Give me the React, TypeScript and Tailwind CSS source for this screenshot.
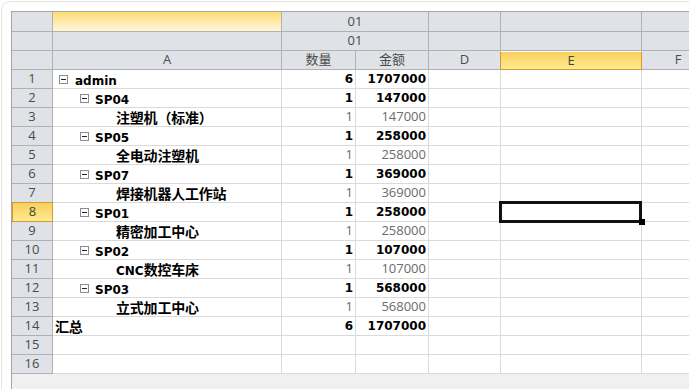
import React from "react";

type Row = {
  n: number;
  level?: 0 | 1 | 2 | 3;
  label?: string;
  qty?: string;
  amt?: string;
};

const rows: Row[] = [
  { n: 1, level: 0, label: "admin", qty: "6", amt: "1707000" },
  { n: 2, level: 1, label: "SP04", qty: "1", amt: "147000" },
  { n: 3, level: 2, label: "注塑机（标准）", qty: "1", amt: "147000" },
  { n: 4, level: 1, label: "SP05", qty: "1", amt: "258000" },
  { n: 5, level: 2, label: "全电动注塑机", qty: "1", amt: "258000" },
  { n: 6, level: 1, label: "SP07", qty: "1", amt: "369000" },
  { n: 7, level: 2, label: "焊接机器人工作站", qty: "1", amt: "369000" },
  { n: 8, level: 1, label: "SP01", qty: "1", amt: "258000" },
  { n: 9, level: 2, label: "精密加工中心", qty: "1", amt: "258000" },
  { n: 10, level: 1, label: "SP02", qty: "1", amt: "107000" },
  { n: 11, level: 2, label: "CNC数控车床", qty: "1", amt: "107000" },
  { n: 12, level: 1, label: "SP03", qty: "1", amt: "568000" },
  { n: 13, level: 2, label: "立式加工中心", qty: "1", amt: "568000" },
  { n: 14, level: 3, label: "汇总", qty: "6", amt: "1707000" },
  { n: 15 },
  { n: 16 },
];

const latin = "font-['DejaVu_Sans','Noto_Sans_CJK_SC',sans-serif]";
const ui = "font-['Open_Sans','Noto_Sans_CJK_SC',sans-serif]";

// split latin / CJK so the Chinese runs come out a bit larger, like the original
function Label({ text }: { text: string }) {
  const parts = text.match(/[\u3000-\u9fff\uff00-\uffef]+|[^\u3000-\u9fff\uff00-\uffef]+/g) || [];
  return (
    <span className="whitespace-nowrap font-bold text-black">
      {parts.map((p, i) =>
        /[\u3000-\u9fff\uff00-\uffef]/.test(p) ? (
          <span key={i} className="font-['Noto_Sans_CJK_SC',sans-serif] text-[14px] tracking-[-0.2px]">
            {p}
          </span>
        ) : (
          <span key={i} className={`${latin} text-[12px]`}>
            {p}
          </span>
        )
      )}
    </span>
  );
}

function Minus() {
  return (
    <span className="flex h-[9px] w-[9px] shrink-0 items-center justify-center border border-[#8c8c8c] bg-white">
      <span className="h-px w-[5px] bg-[#222]" />
    </span>
  );
}

const hdr = "flex items-center justify-center border-r border-b border-[#b1b1b1] bg-[#dfe2e7] text-[13px] text-[#4b4b4b] " + ui;
const hot = "flex items-center justify-center border border-[#d39a33] bg-linear-to-b from-[#f8cf5c] to-[#ffeb8f] text-[13px] text-[#3f4a36] " + ui;
const cell = "border-r border-b border-[#dadada] bg-white";
const strong = `${latin} text-[12px] font-bold text-black`;
const soft = `${ui} text-[13px] text-[#6b6b6b]`;

export default function App() {
  return (
    <div className="h-[389px] w-[689px] overflow-hidden bg-white">
      <div className="ml-px mt-px h-full rounded-tl-[9px] border-l border-t border-[#e4e4e4] pl-[9px] pt-[9px]">
        <div className="h-full overflow-hidden border-l border-t border-[#a6a6a6] bg-[#f0f0f0]">
          <div className="grid w-[703px] grid-cols-[41px_229px_74px_73px_72px_141px_73px] grid-rows-[20px_19px_19px] auto-rows-[19px]">
            {/* header row 1 */}
            <div className={hdr} />
            <div className="border-r border-b border-[#b1b1b1] bg-linear-to-b from-[#fddc70] to-[#fff7da]" />
            <div className={`${hdr} col-span-2`}>01</div>
            <div className={hdr} />
            <div className={hdr} />
            <div className={hdr} />
            {/* header row 2 */}
            <div className={hdr} />
            <div className={hdr} />
            <div className={`${hdr} col-span-2`}>01</div>
            <div className={hdr} />
            <div className={hdr} />
            <div className={hdr} />
            {/* column letters */}
            <div className={hdr} />
            <div className={hdr}>A</div>
            <div className={`${hdr} font-['Noto_Sans_CJK_SC',sans-serif]`}>数量</div>
            <div className={`${hdr} font-['Noto_Sans_CJK_SC',sans-serif]`}>金额</div>
            <div className={hdr}>D</div>
            <div className={`${hot} -ml-px border-t-white`}>E</div>
            <div className={hdr}>F</div>

            {rows.map((r) => {
              const bold = r.level !== 2;
              return (
                <React.Fragment key={r.n}>
                  <div className={r.n === 8 ? `${hot} -mt-px` : hdr}>{r.n}</div>
                  <div className={`${cell} flex items-center`}>
                    {r.level === 0 && (
                      <div className="flex items-center pl-[6px]">
                        <Minus />
                        <span className="pl-[7px]">
                          <Label text={r.label!} />
                        </span>
                      </div>
                    )}
                    {r.level === 1 && (
                      <div className="flex items-center pl-[27px]">
                        <Minus />
                        <span className="pl-[6px]">
                          <Label text={r.label!} />
                        </span>
                      </div>
                    )}
                    {r.level === 2 && (
                      <div className="pl-[63px]">
                        <Label text={r.label!} />
                      </div>
                    )}
                    {r.level === 3 && (
                      <div className="pl-[2px]">
                        <Label text={r.label!} />
                      </div>
                    )}
                  </div>
                  <div className={`${cell} flex items-center justify-end pr-[2px]`}>
                    {r.qty && <span className={bold ? strong : soft}>{r.qty}</span>}
                  </div>
                  <div className={`${cell} flex items-center justify-end pr-[2px]`}>
                    {r.amt && <span className={bold ? strong : soft}>{r.amt}</span>}
                  </div>
                  <div className={cell} />
                  <div className={`${cell} relative`}>
                    {r.n === 8 && (
                      <>
                        <div className="absolute -top-[2px] -left-[2px] z-10 h-[22px] w-[143px] border-[3px] border-[#111]" />
                        <div className="absolute -right-[4px] -bottom-[4px] z-20 h-[6px] w-[6px] bg-black" />
                      </>
                    )}
                  </div>
                  <div className={cell} />
                </React.Fragment>
              );
            })}
          </div>
        </div>
      </div>
    </div>
  );
}
